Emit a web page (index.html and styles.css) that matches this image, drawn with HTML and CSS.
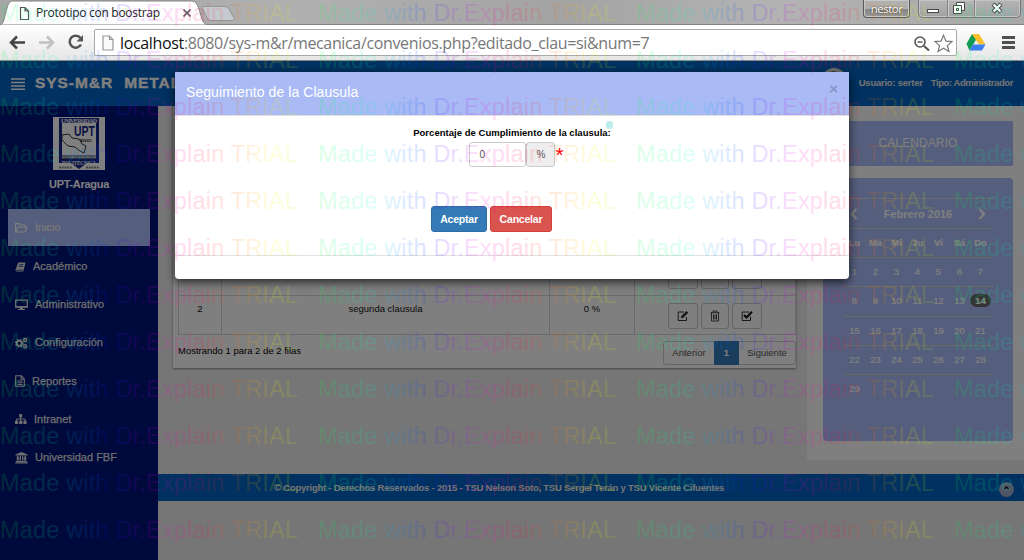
FILE: index.html
```html
<!DOCTYPE html>
<html lang="es">
<head>
<meta charset="utf-8">
<title>Prototipo con boostrap</title>
<link rel="stylesheet" href="styles.css">
</head>
<body>
<div class="browser">
  <header class="tabstrip">
    <svg class="tabs" width="240" height="25" viewBox="0 0 240 25">
      <defs><linearGradient id="tabfill" x1="0" y1="0" x2="0" y2="1"><stop offset="0" stop-color="#fff"/><stop offset="1" stop-color="#fcfcfc"/></linearGradient></defs>
      <path d="M0 25C4 24 4 18 7 8C9 2 10 1 14 1H191C196 1 197 4 199 9C202 18 202 24 208 25Z" fill="url(#tabfill)" stroke="#828282"/>
      <path d="M204 6.500H224Q228 6.500 229 9L234 18Q235 20.500 232 20.500H211Q208 20.500 207 18L203 9Q202 6.500 204 6.500Z" fill="#c5cad0" stroke="#969696"/>
      <path d="M20.500 7.500H25L28.500 11V19.500H20.500ZM25 7.500V11H28.500" fill="#fff" stroke="#555" stroke-width="1.200"/>
      <path d="M183.500 9.500L190.500 16.500M190.500 9.500L183.500 16.500" stroke="#5a5a5a" stroke-width="1.700"/>
    </svg>
    <span class="tab-title">Prototipo con boostrap</span>
    <div class="window-controls">
      <span class="profile">nestor</span>
      <span class="winbuttons">
        <svg width="102" height="18" viewBox="0 0 102 18">
          <path d="M28.500 0V17M55.500 0V17" stroke="#858585"/>
          <path d="M29.500 0V17M56.500 0V17" stroke="#ccc"/>
          <rect x="8.500" y="9.500" width="11" height="3" fill="#fff" stroke="#484848"/>
          <path d="M37.500 2.500H45.500V10.500H37.500Z" fill="#fff" stroke="#484848"/>
          <path d="M34.500 5.500H42.500V13.500H34.500ZM37.500 8.500H39.500V10.500H37.500Z" fill="#fff" stroke="#484848"/>
          <path d="M74 4L82 12M82 4L74 12" stroke="#484848" stroke-width="4.200"/>
          <path d="M74.500 4.500L81.500 11.500M81.500 4.500L74.500 11.500" stroke="#fff" stroke-width="2.200"/>
        </svg>
      </span>
    </div>
  </header>
  <div class="toolbar">
    <svg class="nav-icons" width="85" height="35" viewBox="0 25 85 35">
      <path d="M25 42.500H12M17 36.500L11 42.500L17 48.500" fill="none" stroke="#444" stroke-width="2.500"/>
      <path d="M39 42.500H52M47 36.500L53 42.500L47 48.500" fill="none" stroke="#c0c0c0" stroke-width="2.500"/>
      <path d="M80.500 38A6 6 0 1 0 81 44.500" fill="none" stroke="#555" stroke-width="2.500"/>
      <path d="M83 35V41.500H76.500Z" fill="#555"/>
    </svg>
    <div class="omnibox">
      <svg width="14" height="18" viewBox="0 0 14 18"><path d="M2 2H8.500L12 5.500V16H2ZM8.500 2V5.500H12" fill="#fafafa" stroke="#999" stroke-width="1.200"/></svg>
      <span class="url"><b>localhost</b>:8080/sys-m&amp;r/mecanica/convenios.php?editado_clau=si&amp;num=7</span>
      <svg class="box-icons" width="42" height="22" viewBox="912 31 42 22">
        <circle cx="920" cy="41" r="5" fill="none" stroke="#555" stroke-width="1.600"/><path d="M917.500 41H922.500" stroke="#555" stroke-width="1.400"/><path d="M924 45L929 49.500" stroke="#555" stroke-width="2.200"/>
        <path d="M943.500 34.300L946 40.200L952 40.600L947.400 44.600L949 50.500L943.500 47.200L938 50.500L939.600 44.600L935 40.600L941 40.200Z" fill="#fff" stroke="#777" stroke-width="1.200"/>
      </svg>
    </div>
    <svg class="ext-icons" width="66" height="35" viewBox="958 25 66 35">
      <path d="M972 34L966.500 43.800L969.500 50.500L976.500 39Z" fill="#129b52"/><path d="M972 34H979L985.500 44.500H979Z" fill="#fbc02d"/><path d="M969.500 50.500L973 44.500H985.500L982 50.500Z" fill="#3c7df0"/>
      <path d="M1002 37.500H1015M1002 42.500H1015M1002 47.500H1015" stroke="#505050" stroke-width="2.800"/>
    </svg>
  </div>
</div>

<main class="app">
  <nav class="navbar">
    <svg width="14" height="12" viewBox="0 0 14 12"><path d="M0 1H14M0 4.500H14M0 8H14M0 11.300H14" stroke="#fff" stroke-width="1.700"/></svg>
    <span class="brand">SYS-M&amp;R</span><span class="brand brand2">METAL</span>
    <span class="user"><i class="avatar"><i></i></i><span class="uname">Usuario: serter</span><span class="utype">Tipo: Administrador</span></span>
  </nav>
  <div class="body">
    <aside class="sidebar">
      <svg class="logo" width="52" height="53" viewBox="0 0 52 53">
        <rect width="52" height="53" fill="#fff"/>
        <path d="M6 1H46V46H34L26 52L18 46H6Z" fill="#17268a"/>
        <path d="M9 6H43V38H9Z" fill="#fff"/>
        <text x="8" y="5.500" class="lg w" textLength="36">UNIVERSIDAD</text>
        <text x="21" y="19" class="lg big" textLength="21" lengthAdjust="spacingAndGlyphs">UPT</text>
        <text x="26" y="25" class="lg k" textLength="13">ARAGUA</text>
        <path d="M9 18L16 17L19 21L26 22L29 27L33 29L31 36L27 34L22 30L15 29L9 23Z" fill="#fff" stroke="#222" stroke-width=".9"/>
        <path d="M9 40H43" stroke="#fff" stroke-width="3"/>
        <text x="9" y="41.500" class="lg k" textLength="34" lengthAdjust="spacingAndGlyphs">FEDERICO BRITO FIGUEROA</text>
        <text x="9" y="47.500" class="lg w" textLength="34" lengthAdjust="spacingAndGlyphs">POLITECNICA</text>
        <path d="M6 50.500H19M33 50.500H46" stroke="#888" stroke-width="2" stroke-dasharray="2 .7"/>
      </svg>
      <strong class="school">UPT-Aragua</strong>
      <ul class="menu">
        <li class="active"><svg width="13" height="12" viewBox="0 0 13 12"><path d="M.6 9.500V1.600H4L5 3H10V5M.8 10L3 5.200H12L9.800 10Z" fill="none" stroke="#fff" stroke-width="1.100"/></svg><span>Inicio</span></li>
        <li><svg width="11" height="12" viewBox="0 0 12 12"><path d="M3.500 1H11.500L9 11H2Q0 11 .8 8.500Z" fill="#ddd"/><path d="M4.800 3.400H9.300M4.200 5.400H8.800M1.500 9.500H8.500" stroke="#001478" stroke-width=".8"/></svg><span>Académico</span></li>
        <li><svg width="13" height="12" viewBox="0 0 13 12"><path d="M.7 1.200H12.300V8H.7Z" fill="none" stroke="#ddd" stroke-width="1.300"/><path d="M0 7.200H13V8.500H0ZM5 8H8V10H10V11H3V10H5Z" fill="#ddd"/></svg><span>Administrativo</span></li>
        <li><svg width="13" height="12" viewBox="0 0 13 12"><circle cx="4.300" cy="6.300" r="2.600" fill="none" stroke="#ddd" stroke-width="1.900"/><circle cx="4.300" cy="6.300" r="3.800" fill="none" stroke="#ddd" stroke-width="1.200" stroke-dasharray="1.500"/><circle cx="10.200" cy="3" r="1.500" fill="none" stroke="#ddd" stroke-width="1.500"/><circle cx="10.200" cy="9.200" r="1.500" fill="none" stroke="#ddd" stroke-width="1.500"/></svg><span>Configuración</span></li>
        <li><svg width="10" height="12" viewBox="0 0 10 12"><path d="M.7 .7H6.300L9.300 4V11.300H.7ZM6 .7V4.300H9.500M2.700 6H7.500M2.700 7.800H7.500M2.700 9.500H7.500" fill="none" stroke="#ddd" stroke-width="1.100"/></svg><span>Reportes</span></li>
        <li><svg width="12" height="12" viewBox="0 0 12 12"><path d="M4.200 1H7.200V4.200H4.200ZM0 7.800H3.200V11H0ZM4.200 7.800H7.400V11H4.200ZM8.400 7.800H11.600V11H8.400Z" fill="#ddd"/><path d="M5.700 4V8M1.600 8V6H10V8" fill="none" stroke="#ddd"/></svg><span>Intranet</span></li>
        <li><svg width="13" height="12" viewBox="0 0 13 12"><path d="M6.500 0L12.500 2.600V3.500H.5V2.600ZM1.800 4.200H3.800V8.500H1.800ZM4.600 4.200H6V8.500H4.600ZM7 4.200H8.400V8.500H7ZM9.200 4.200H11.200V8.500H9.200ZM1 9H12V10H1ZM.3 10.200H12.700V11.500H.3Z" fill="#ddd"/></svg><span>Universidad FBF</span></li>
      </ul>
    </aside>
    <div class="main">
      <div class="columns">
        <section class="panel">
          <table class="grid">
            <colgroup><col class="c1"><col class="c2"><col class="c3"><col class="c4"></colgroup>
            <tr class="first"><td></td><td></td><td></td><td><div class="acts"><i></i><i></i><i></i></div></td></tr>
            <tr><td>2</td><td><span class="seg">segunda clausula</span></td><td>0 %</td><td><div class="acts">
              <i><svg width="12" height="12" viewBox="0 0 12 12"><path d="M7 2H1.200V10.500H9.500V7" fill="none" stroke="#333" stroke-width="1"/><path d="M3.800 8.200L4.300 6L9.500 .9L11.300 2.700L6.100 7.900Z" fill="#333"/></svg></i><i><svg width="10" height="12" viewBox="0 0 10 12"><path d="M.5 2.700H9.500M3 2.500V1H7V2.500M1.500 3V11H8.500V3M3.500 4.500V9.500M5 4.500V9.500M6.500 4.500V9.500" fill="none" stroke="#333" stroke-width=".9"/></svg></i><i><svg width="12" height="12" viewBox="0 0 12 12"><path d="M9.500 6.500V10.500H1.200V2H8" fill="none" stroke="#333" stroke-width="1"/><path d="M3 5L5.500 7.500L11 1.800" fill="none" stroke="#111" stroke-width="2"/></svg></i>
            </div></td></tr>
          </table>
          <div class="table-foot"><span class="info">Mostrando 1 para 2 de 2 filas</span>
            <div class="pager"><span class="prev">Anterior</span><b>1</b><span class="next">Siguiente</span></div></div>
        </section>
        <section class="right">
          <h3 class="cal-title">CALENDARIO</h3>
          <div class="calendar">
            <div class="cal-head"><svg width="8" height="12" viewBox="0 0 8 12"><path d="M6.500 1L2 6L6.500 11" fill="none" stroke="#fff" stroke-width="2.300"/></svg><b>Febrero 2016</b><svg width="8" height="12" viewBox="0 0 8 12"><path d="M1.500 1L6 6L1.500 11" fill="none" stroke="#fff" stroke-width="2.300"/></svg></div>
            <div class="week bold"><span>Lu</span><span>Ma</span><span>Mi</span><span>Ju</span><span>Vi</span><span>Sá</span><span>Do</span></div>
            <div class="week"><span>1</span><span>2</span><span>3</span><span>4</span><span>5</span><span>6</span><span>7</span></div>
            <div class="week tall"><span>8</span><span>9</span><span>10</span><span>11</span><span>12</span><span>13</span><span><b class="today">14</b></span></div>
            <div class="week"><span>15</span><span>16</span><span>17</span><span>18</span><span>19</span><span>20</span><span>21</span></div>
            <div class="week"><span>22</span><span>23</span><span>24</span><span>25</span><span>26</span><span>27</span><span>28</span></div>
            <div class="week last"><span>29</span><span></span><span></span><span></span><span></span><span></span><span></span></div>
          </div>
        </section>
      </div>
      <footer class="footer"><span class="copy">© Copyright - Derechos Reservados - 2015 - TSU Nelson Soto, TSU Sergei Terán y TSU Vicente Cifuentes</span>
        <svg class="totop" width="15" height="15" viewBox="0 0 15 15"><circle cx="7.500" cy="7.500" r="7.500" fill="#a0accc"/><path d="M5.500 7L7.500 5L9.500 7" fill="none" stroke="#111" stroke-width="1.300"/></svg></footer>
    </div>
  </div>
  <div class="backdrop"></div>
  <div class="modal">
    <div class="modal-head"><span class="mtitle">Seguimiento de la Clausula</span><span class="close">×</span></div>
    <div class="modal-body">
      <label><span class="lbl">Porcentaje de Cumplimiento de la clausula:</span><i class="dot"></i></label>
      <div class="field"><span class="input">0</span><span class="addon">%</span><span class="req">*</span></div>
      <div class="buttons"><button class="btn ok">Aceptar</button><button class="btn cancel">Cancelar</button></div>
    </div>
    <div class="modal-foot"></div>
  </div>
</main>

<svg class="watermark" width="1024" height="560" viewBox="0 0 1024 560">
  <defs>
    <linearGradient id="rainbow" gradientUnits="userSpaceOnUse" x1="0" y1="0" x2="318" y2="0" spreadMethod="repeat">
      <stop offset="0" stop-color="#00ff40"/><stop offset=".17" stop-color="#00ffd0"/><stop offset=".24" stop-color="#00a0ff"/><stop offset=".34" stop-color="#0020ff"/><stop offset=".42" stop-color="#8000ff"/><stop offset=".52" stop-color="#ff00e0"/><stop offset=".64" stop-color="#ff0040"/><stop offset=".76" stop-color="#ff8000"/><stop offset=".86" stop-color="#ffff00"/><stop offset="1" stop-color="#60ff00"/>
    </linearGradient>
    <g id="line" class="wm-line"><text x="0" y="0" textLength="298">Made with Dr.Explain TRIAL</text><text x="318" y="0" textLength="298">Made with Dr.Explain TRIAL</text><text x="636" y="0" textLength="298">Made with Dr.Explain TRIAL</text><text x="954" y="0" textLength="298">Made with Dr.Explain TRIAL</text></g>
  </defs>
  <use href="#line" y="21"/><use href="#line" y="68"/><use href="#line" y="115"/><use href="#line" y="162"/><use href="#line" y="209"/><use href="#line" y="256"/><use href="#line" y="303"/><use href="#line" y="350"/><use href="#line" y="397"/><use href="#line" y="444"/><use href="#line" y="491"/><use href="#line" y="538"/>
</svg>
</body>
</html>
```
FILE: styles.css
```css
* { box-sizing: border-box; }
body { margin: 0; width: 1024px; height: 560px; overflow: hidden; position: relative; font: 10px "Liberation Sans", Arial, sans-serif; color: #000; }
i { font-style: normal; }
svg { display: block; flex: none; }

.browser { height: 61px; border-bottom: 1px solid #888; font-family: "Open Sans", sans-serif; }
.tabstrip { display: flex; height: 25px; position: relative; background: linear-gradient(100deg, #a6a6a6, #b0b0b0 30%, #a3a3a3 55%, #b3b3b3 75%, #a8a8a8); border-bottom: 1px solid #838383; }
.tabs { position: absolute; left: 0; top: 0; }
.tab-title { position: relative; margin-left: 36px; line-height: 26px; font-size: 12px; letter-spacing: -.28px; color: #222; white-space: nowrap; }
.window-controls { display: flex; margin-left: auto; padding-right: 3px; gap: 8px; }
.profile { width: 47px; height: 18px; border: 1px solid #5a5a5a; border-top: 0; border-radius: 0 0 4px 4px; box-shadow: inset 0 0 0 1px #c8c8c8; background: linear-gradient(#b0b0b0 50%, #868686 55%, #999); color: #fff; font-size: 11.500px; line-height: 17px; text-align: center; letter-spacing: -.5px; text-shadow: 0 0 2px #222; }
.winbuttons { width: 103px; height: 18px; border: 1px solid #777; border-top: 0; border-radius: 0 0 5px 5px; box-shadow: inset 0 0 0 1px #c4c4c4; background: linear-gradient(#b4b4b4, #a2a2a2); }
.toolbar { display: flex; height: 35px; background: linear-gradient(#fff, #e6e6e6); }
.omnibox { display: flex; align-items: center; margin: 4px 0 4px 9px; width: 863px; height: 27px; border: 1px solid #a9a9a9; border-radius: 2px; background: #fff; padding-left: 6px; }
.url { margin-left: 5px; font-size: 16px; letter-spacing: -.35px; color: #777; white-space: nowrap; }
.url b { font-weight: 400; color: #111; }
.box-icons { margin-left: auto; margin-right: 2px; }
.ext-icons { margin-left: 1px; }

.app { position: relative; height: 499px; overflow: hidden; background: #ececec; }
.navbar { display: flex; align-items: center; height: 45px; padding: 0 11px; background: #0062c0; color: #fff; }
.brand { margin-left: 10px; font-weight: 700; font-size: 15.500px; line-height: 14px; letter-spacing: .95px; margin-top: -2px; -webkit-text-stroke: .4px #fff; }
.brand2 { margin-left: 11px; }
.user { display: flex; align-items: center; margin: -3px 0 0 auto; font-weight: 700; font-size: 9.500px; color: #e6e6e6; }
.avatar { display: flex; justify-content: center; width: 26px; height: 26px; margin: -3px 12px 0 0; border-radius: 50%; background: #ddd; }
.avatar i { width: 7px; height: 7px; margin-top: 3px; border-radius: 50%; background: #777; }
.uname { margin-right: 8px; letter-spacing: -.24px; }
.utype { letter-spacing: -.42px; }

.body { display: flex; height: 454px; }
.sidebar { display: flex; flex-direction: column; align-items: center; width: 158px; padding-top: 11px; background: #001278; color: #ddd; }
.lg { font: 700 6px "Liberation Serif", serif; }
.w { fill: #fff; }
.k { font-size: 4px; fill: #111; }
.big { font: 700 14px "Liberation Sans", sans-serif; fill: #17268a; }
.school { margin-top: 8px; line-height: 12px; font-size: 11px; letter-spacing: -.3px; color: #fff; }
.menu { align-self: stretch; margin: 19px 8px 0; padding: 0; list-style: none; font-size: 11px; font-weight: 400; }
.menu li { display: flex; align-items: center; height: 38.200px; padding-left: 7px; gap: 7px; -webkit-text-stroke: .25px #ddd; }
.menu span { margin-top: -1px; }
.menu .active { height: 37px; background: #aabcfa; color: #fff; }
.menu li:nth-child(2) { margin-top: 1.500px; }

.main { flex: 1; min-width: 0; }
.columns { display: flex; height: 368px; }
.panel { margin-left: 15px; width: 623px; height: 262px; padding: 143px 0 0 5px; background: #fff; box-shadow: 0 1px 2px #888; }
.grid { width: 618px; border-collapse: collapse; table-layout: fixed; text-align: center; color: #111; font-size: 9.500px; }
.grid td { border: 1px solid #d4d4d4; padding: 7px 0 0; vertical-align: top; }
.grid tr { height: 39px; }
.grid .first { height: 46px; }
.grid .first td { padding-top: 13px; }
.c1 { width: 43px; } .c2 { width: 328px; } .c3 { width: 85px; }
.acts { display: flex; gap: 3px; padding-left: 33px; }
.acts i { display: flex; align-items: center; justify-content: center; width: 30px; height: 26px; border: 1px solid #c8c8c8; border-radius: 3px; }
.acts i:nth-child(2) { width: 28px; }
.seg { letter-spacing: 0; }
.table-foot { display: flex; justify-content: space-between; padding-top: 6px; }
.info { font-size: 9.500px; line-height: 20px; letter-spacing: 0; white-space: nowrap; }
.pager { display: flex; width: 133px; height: 24px; border: 1px solid #ccc; border-radius: 3px; line-height: 22px; font-size: 9.500px; text-align: center; color: #555; }
.prev { width: 50px; } .next { flex: 1; }
.pager b { width: 25px; margin: -1px 0; line-height: 24px; background: #337ab7; color: #fff; }
.right { margin-left: 11px; width: 217px; height: 354px; padding: 15px 11px 0 16px; background: #fff; }
.cal-title { margin: 0; height: 45px; line-height: 44px; background: #aabcfa; color: #fff; font-size: 12px; font-weight: 400; text-align: center; letter-spacing: .1px; }
.calendar { margin-top: 12px; height: 263px; padding: 20px; border-radius: 4px; background: #aabcfa; color: #fff; }
.cal-head { display: flex; align-items: center; justify-content: space-between; height: 30px; padding: 0 7px; border-top: 1px solid #d6d6d6; font-size: 11px; }
.week { display: grid; grid-template-columns: repeat(7, 21px); height: 29px; padding-left: 1px; border-top: 1px solid #d2d2d0; line-height: 28px; font-size: 9.500px; text-align: center; -webkit-text-stroke: .2px #fff; }
.bold { font-weight: 700; }
.tall { height: 30px; }
.today { display: inline-block; width: 21px; height: 13px; border-radius: 7px; line-height: 13px; background: #666; color: #fff; }
.footer { display: flex; align-items: center; height: 27px; background: #0062c0; color: #e8e8e8; }
.copy { flex: none; margin-left: 116px; font-weight: 700; font-size: 9.500px; letter-spacing: -.23px; white-space: nowrap; }
.totop { margin: 4px 10px 0 auto; }

.backdrop { position: absolute; inset: 0; background: rgba(0, 0, 0, .5); }
.modal { position: absolute; left: 175px; top: 11px; width: 674px; height: 207px; border-radius: 0 0 4px 4px; background: #fff; box-shadow: 0 3px 10px rgba(0, 0, 0, .7); }
.modal-head { display: flex; justify-content: space-between; height: 44px; padding: 0 11px 0 11px; border-bottom: 1px solid #e0e0e0; background: #a9baf5; color: #fff; font-size: 14px; line-height: 41px; }
.mtitle { letter-spacing: .07px; }
.close { font-size: 15px; font-weight: 700; line-height: 34px; color: #8794c4; }
.modal-body { display: flex; flex-direction: column; align-items: center; height: 140px; padding-top: 10px; border-bottom: 1px solid #e2e2e2; }
label { position: relative; line-height: 14px; font-weight: 700; white-space: nowrap; }
.lbl { font-size: 9.500px; letter-spacing: .03px; }
.dot { position: absolute; right: -2px; top: -5px; width: 7px; height: 8px; border-radius: 3px; background: #bdeeee; }
.field { display: flex; height: 25px; margin: 2px 0 0 0; padding-left: 9px; }
.input, .addon { border: 1px solid #ccc; border-radius: 3px; line-height: 23px; color: #555; font-size: 10px; }
.input { width: 57px; padding-left: 9px; }
.addon { width: 29px; background: #eee; text-align: center; }
.req { color: #f00; font-size: 21px; line-height: 26px; }
.buttons { display: flex; gap: 3px; margin: 39px 41px 0 0; }
.btn { height: 26px; padding: 0; border: 1px solid; border-radius: 3px; color: #fff; font: 700 10.500px/22px "Liberation Sans", sans-serif; letter-spacing: -.2px; }
.ok { width: 56px; border-color: #2e6da4; background: #337ab7; }
.cancel { width: 62px; border-color: #d43f3a; background: #d9534f; }

.watermark { position: absolute; left: 0; top: 0; opacity: .13; pointer-events: none; }
.wm-line { font: 23.500px "Liberation Sans", Arial, sans-serif; fill: url(#rainbow); }
```
